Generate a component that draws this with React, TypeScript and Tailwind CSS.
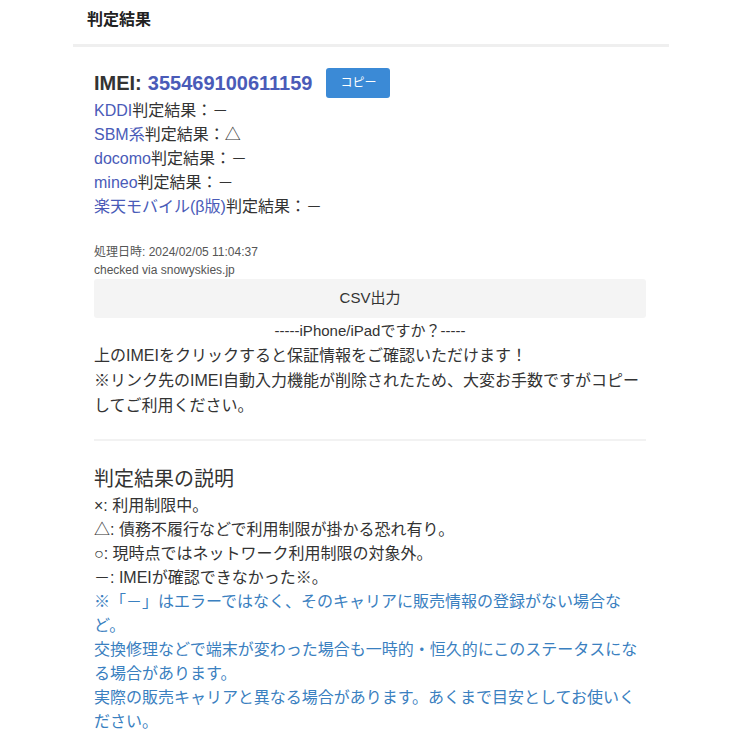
import React from 'react';

const carriers = [
  { name: 'KDDI', result: '－' },
  { name: 'SBM系', result: '△' },
  { name: 'docomo', result: '－' },
  { name: 'mineo', result: '－' },
  { name: '楽天モバイル(β版)', result: '－' },
];

const App: React.FC = () => {
  return (
    <div
      className="min-h-screen bg-white text-[#333]"
      style={{ fontFamily: '"Liberation Sans", Arial, "Noto Sans CJK JP", sans-serif' }}
    >
      <div className="w-[596px] mx-auto">
        {/* Header */}
        <div className="h-[47px] flex items-center px-[14px] pb-[4px] border-b-[3px] border-[#efefef]">
          <h1 className="text-[16px] font-bold text-[#222]">判定結果</h1>
        </div>

        <div className="pl-[21px] pr-[23px] pt-[21px] pb-6">
          {/* IMEI */}
          <div className="flex items-center h-[30px]">
            <span className="text-[20px] font-bold text-[#333]">IMEI:</span>
            <a className="text-[20px] font-bold text-[#4a5bb8] ml-[6px]">355469100611159</a>
            <button className="ml-[14px] h-[30px] px-[14px] bg-[#3b8ad6] text-white text-[12px] rounded-[3px]">
              コピー
            </button>
          </div>

          {/* Carrier results */}
          <div className="mt-[1px] text-[16px] leading-[24px]">
            {carriers.map((c) => (
              <div key={c.name}>
                <a className="text-[#4a5bb8]">{c.name}</a>
                <span>判定結果：{c.result}</span>
              </div>
            ))}
          </div>

          <div className="mt-[24px] text-[12px] leading-[18px] text-[#555]">
            <div>処理日時: 2024/02/05 11:04:37</div>
            <div>checked via snowyskies.jp</div>
          </div>

          <button className="w-full h-[39px] bg-[#f4f4f4] rounded-[3px] text-[15px] text-[#333]">
            CSV出力
          </button>

          <div className="text-center text-[15px] leading-[24px] mt-[1px]">-----iPhone/iPadですか？-----</div>
          <p className="text-[16px] leading-[25px]">
            上のIMEIをクリックすると保証情報をご確認いただけます！
            <br />
            ※リンク先のIMEI自動入力機能が削除されたため、大変お手数ですがコピーしてご利用ください。
          </p>

          <hr className="mt-[21px] border-0 border-t-2 border-[#f2f2f2]" />

          <h2 className="mt-[23px] text-[20px] leading-[30px] text-[#333]">判定結果の説明</h2>
          <div className="text-[16px] leading-[24px]">
            <div>×: 利用制限中。</div>
            <div>△: 債務不履行などで利用制限が掛かる恐れ有り。</div>
            <div>○: 現時点ではネットワーク利用制限の対象外。</div>
            <div>－: IMEIが確認できなかった※。</div>
            <div className="text-[#3a80c0]">
              ※「－」はエラーではなく、そのキャリアに販売情報の登録がない場合など。
              <br />
              交換修理などで端末が変わった場合も一時的・恒久的にこのステータスになる場合があります。
              <br />
              実際の販売キャリアと異なる場合があります。あくまで目安としてお使いください。
            </div>
          </div>
        </div>
      </div>
    </div>
  );
};

export default App;
